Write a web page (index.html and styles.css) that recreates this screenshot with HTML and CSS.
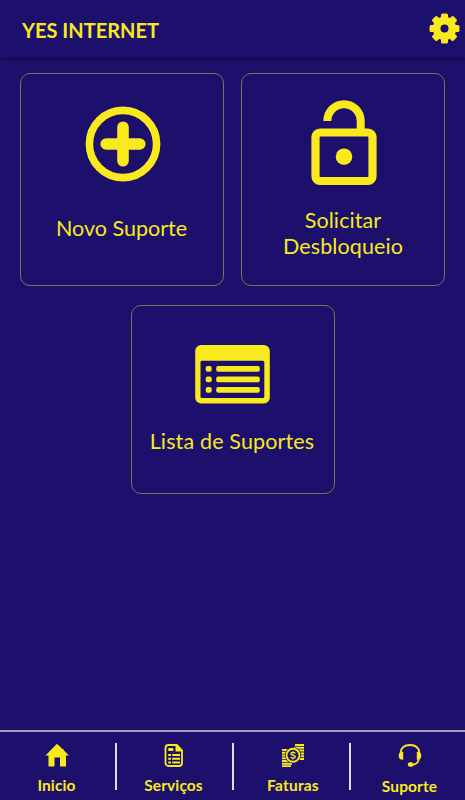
FILE: index.html
```html
<!DOCTYPE html>
<html lang="pt-BR">

<head>
    <meta charset="UTF-8">
    <meta name="viewport" content="width=device-width, initial-scale=1.0">
    <title>YES INTERNET</title>
    <link rel="stylesheet" href="styles.css">
</head>

<body>
    <div class="app">
        <header class="header">
            <h1>YES INTERNET</h1>
            <svg class="gear" viewBox="0 0 32 32">
                <g fill="currentColor">
                    <circle cx="16" cy="16" r="11.4" />
                    <rect x="12.6" y="1.5" width="6.8" height="29" rx="1.5" />
                    <rect x="12.6" y="1.5" width="6.8" height="29" rx="1.5" transform="rotate(45 16 16)" />
                    <rect x="12.6" y="1.5" width="6.8" height="29" rx="1.5" transform="rotate(90 16 16)" />
                    <rect x="12.6" y="1.5" width="6.8" height="29" rx="1.5" transform="rotate(135 16 16)" />
                </g>
                <circle class="hole" cx="16" cy="16" r="3.9" />
            </svg>
        </header>

        <main class="cards">
            <a class="card card-novo">
                <svg width="76" height="76" viewBox="0 0 76 76">
                    <circle cx="38" cy="38" r="33.6" fill="none" stroke="currentColor" stroke-width="7.6" />
                    <path d="M38 21.2v33.6M21.2 38h33.6" stroke="currentColor" stroke-width="11.6" stroke-linecap="round" />
                </svg>
                <span>Novo Suporte</span>
            </a>
            <a class="card card-desbloqueio">
                <svg width="66" height="86" viewBox="0 0 66 86">
                    <path d="M16.3 21A16.7 16.7 0 0 1 49.7 21v10" fill="none" stroke="currentColor" stroke-width="8" />
                    <rect x="4.5" y="32.5" width="57" height="48.5" rx="4.5" fill="none" stroke="currentColor" stroke-width="8.2" />
                    <circle cx="33" cy="56.7" r="8.3" fill="currentColor" />
                </svg>
                <span>Solicitar<br>Desbloqueio</span>
            </a>
            <a class="card card-lista">
                <svg width="75" height="59" viewBox="0 0 75 59">
                    <rect x="0.2" y="0" width="74.6" height="58.4" rx="6" fill="currentColor" />
                    <rect class="hole" x="5.5" y="15.7" width="63.8" height="37.4" rx="1.5" />
                    <g fill="currentColor">
                        <rect x="10.7" y="21" width="6" height="5.8" rx="2" />
                        <rect x="10.7" y="31.5" width="6" height="5.8" rx="2" />
                        <rect x="10.7" y="42" width="6" height="5.8" rx="2" />
                        <rect x="21.2" y="21" width="43.6" height="5.8" rx="2" />
                        <rect x="21.2" y="31.5" width="43.6" height="5.8" rx="2" />
                        <rect x="21.2" y="42" width="43.6" height="5.8" rx="2" />
                    </g>
                </svg>
                <span>Lista de Suportes</span>
            </a>
        </main>

        <nav class="navbar">
            <a class="nav-item nav-inicio">
                <svg viewBox="0 0 24 24">
                    <path fill="currentColor" d="M12 .8 17.5 6h1v1L24 12.4h-3v11.1h-6v-9H9.5v9h-6V12.4h-3z" />
                </svg>
                <span>Inicio</span>
            </a>
            <a class="nav-item nav-servicos">
                <svg viewBox="0 0 24 24">
                    <path d="M6.5 2h8L20 8v12a3 3 0 0 1-3 3H6.500a3 3 0 0 1-3-3V5a3 3 0 0 1 3-3z" fill="none" stroke="currentColor" stroke-width="1.8" />
                    <path d="M13.5 1.500h2L20.800 7v1.500h-7.300z" fill="currentColor" />
                    <path d="M6.300 6.500h5" fill="none" stroke="currentColor" stroke-width="3" />
                    <path d="M6.200 12H9M10.200 12H18M6.200 15.800H9M10.200 15.800H18M6.200 19.600H9M10.200 19.600H18" stroke="currentColor" stroke-width="2" />
                </svg>
                <span>Serviços</span>
            </a>
            <a class="nav-item nav-faturas">
                <svg viewBox="0 0 24 24">
                    <path d="M14 2h9M13 4.800h10M15 7.600h8M17 10.400h6M17 13.200h6M17 16h6M1 6.900h7M1 9.700h5M1 12.500h5M1 15.300h5M1 18.100h7M1 20.800h10M1 23.200h9" stroke="currentColor" stroke-width="2" />
                    <circle class="hole" cx="12" cy="12.3" r="8.1" />
                    <circle cx="12" cy="12.3" r="6.5" fill="none" stroke="currentColor" stroke-width="1.9" />
                    <path d="M14.200 10.300c-.7-1.200-4.300-1.100-4.300.5 0 1.800 4.400 1 4.400 2.900 0 1.800-3.900 1.700-4.700.5" fill="none" stroke="currentColor" stroke-width="1.4" />
                    <path d="M12 8.300v1.400M12 15v1.400" stroke="currentColor" stroke-width="1.2" />
                </svg>
                <span>Faturas</span>
            </a>
            <a class="nav-item nav-suporte">
                <svg viewBox="0 0 24 24">
                    <path d="M2.500 10C3 5 6.500 2 12 2s9 3 9.500 8M21 15.500c-.6 4.700-3 6.300-8 6.300" fill="none" stroke="currentColor" stroke-width="1.8" />
                    <path d="M5.200 8.700v8.100C2.300 17.100.7 15.300.7 12.700s1.600-4.200 4.500-4zM18.800 8.700v8.100c2.900.3 4.500-1.500 4.500-4.100s-1.600-4.200-4.500-4z" fill="currentColor" />
                    <rect x="9.800" y="19.3" width="5.7" height="4.5" rx="2.2" fill="currentColor" />
                </svg>
                <span>Suporte</span>
            </a>
        </nav>
    </div>
</body>

</html>
```
FILE: styles.css
```css
* {
    margin: 0;
    padding: 0;
    box-sizing: border-box;
}

body {
    font-family: Lato, 'Open Sans', sans-serif;
    background: #1c106c;
    color: #f8ea1c;
}

.app {
    display: flex;
    flex-direction: column;
    height: 100vh;
    overflow: hidden;
}

.header {
    height: 58px;
    padding: 0 4px 0 22px;
    display: flex;
    justify-content: space-between;
    align-items: center;
    box-shadow: 0 1px 3px rgba(0, 0, 0, 0.6);
}

.header h1 {
    font-size: 20px;
    font-weight: 700;
    line-height: 24px;
    padding-top: 2px;
}

.gear {
    width: 33px;
    height: 33px;
    margin-top: -2px;
}

.hole {
    fill: #1c106c;
}

.cards {
    flex: 1;
    display: flex;
    flex-wrap: wrap;
    justify-content: center;
    align-content: flex-start;
    gap: 19px 17px;
    padding-top: 15px;
}

.card {
    width: 204px;
    height: 213px;
    border: 1px solid #7d7352;
    border-radius: 10px;
    display: flex;
    flex-direction: column;
    align-items: center;
    text-align: center;
    font-size: 21.5px;
    line-height: 26px;
}

.card-novo {
    padding: 32px 0 0 2px;
}

.card-novo span {
    margin: 33px 3px 0 0;
}

.card-desbloqueio {
    padding: 26px 0 0 2px;
}

.card-desbloqueio span {
    margin: 21px 2px 0 0;
    letter-spacing: 0.1px;
}

.card-lista {
    height: 189px;
    padding-top: 39px;
}

.card-lista span {
    margin: 24px 1px 0 0;
    letter-spacing: 0.15px;
}

.navbar {
    height: 70px;
    border-top: 2px solid #a39eb9;
    display: grid;
    grid-template-columns: 115px 117px 117px 1fr;
    grid-template-rows: 47px;
    padding-top: 11px;
}

.nav-item {
    display: flex;
    flex-direction: column;
    align-items: center;
    font-size: 15.5px;
    font-weight: 700;
    line-height: 20px;
    letter-spacing: 0.1px;
}

.nav-item + .nav-item {
    border-left: 2px solid #dedce9;
}

.nav-item svg {
    width: 24px;
    height: 24px;
    margin-bottom: 8px;
    flex-shrink: 0;
}

.nav-inicio,
.nav-servicos {
    padding-right: 2px;
}

.nav-faturas {
    padding-left: 3px;
    letter-spacing: 0.2px;
}

.nav-suporte {
    padding-left: 3px;
}

.nav-suporte span {
    padding-top: 1px;
}
```
